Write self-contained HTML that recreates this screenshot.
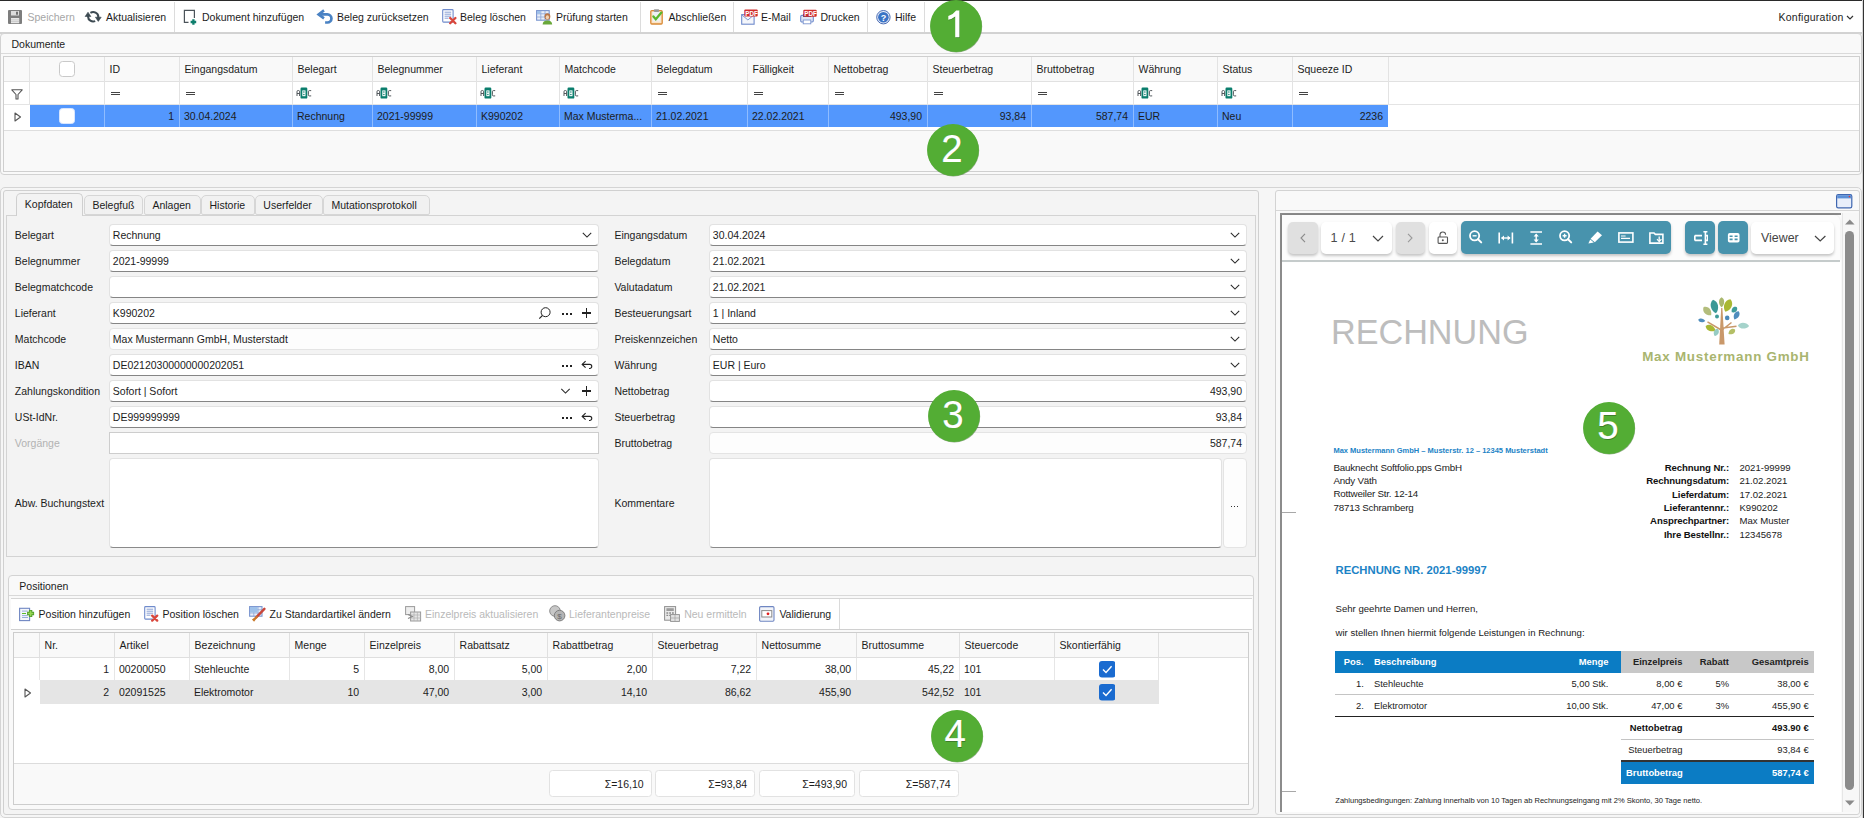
<!DOCTYPE html>
<html><head><meta charset="utf-8"><style>
html,body{margin:0;padding:0}
body{width:1864px;height:818px;overflow:hidden;position:relative;background:#f4f4f4;font-family:"Liberation Sans",sans-serif;color:#1c1c1c}
.a{position:absolute;box-sizing:border-box}
.t{position:absolute;white-space:nowrap}
</style></head><body>
<div class="a" style="left:0px;top:0px;width:1864px;height:1px;background:#2a2a2a"></div>
<div class="a" style="left:0px;top:1px;width:1862px;height:31px;background:#ffffff"></div>
<div class="a" style="left:1862px;top:0px;width:1px;height:818px;background:#d8d8d8"></div>
<div class="a" style="left:1863px;top:0px;width:1px;height:818px;background:#333333"></div>
<div class="a" style="left:0px;top:32px;width:1862px;height:2px;background:#d3d3d3"></div>
<div class="a" style="left:174px;top:2px;width:1px;height:30px;background:#dcdcdc"></div>
<div class="a" style="left:640px;top:2px;width:1px;height:30px;background:#dcdcdc"></div>
<div class="a" style="left:733px;top:2px;width:1px;height:30px;background:#dcdcdc"></div>
<div class="a" style="left:867px;top:2px;width:1px;height:30px;background:#dcdcdc"></div>
<div class="a" style="left:924px;top:2px;width:1px;height:30px;background:#dcdcdc"></div>
<div class="t" style="left:27.5px;top:11.23px;font-size:10.5px;line-height:12.6px;color:#a6a6a6">Speichern</div>
<div class="t" style="left:106px;top:11.23px;font-size:10.5px;line-height:12.6px;">Aktualisieren</div>
<div class="t" style="left:202px;top:11.23px;font-size:10.5px;line-height:12.6px;">Dokument hinzufügen</div>
<div class="t" style="left:337px;top:11.23px;font-size:10.5px;line-height:12.6px;">Beleg zurücksetzen</div>
<div class="t" style="left:460px;top:11.23px;font-size:10.5px;line-height:12.6px;">Beleg löschen</div>
<div class="t" style="left:556px;top:11.23px;font-size:10.5px;line-height:12.6px;">Prüfung starten</div>
<div class="t" style="left:668.5px;top:11.23px;font-size:10.5px;line-height:12.6px;">Abschließen</div>
<div class="t" style="left:761px;top:11.23px;font-size:10.5px;line-height:12.6px;">E-Mail</div>
<div class="t" style="left:820.5px;top:11.23px;font-size:10.5px;line-height:12.6px;">Drucken</div>
<div class="t" style="left:895px;top:11.23px;font-size:10.5px;line-height:12.6px;">Hilfe</div>
<div class="t" style="left:1778.5px;top:11.23px;font-size:10.5px;line-height:12.6px;letter-spacing:0.25px">Konfiguration</div>
<svg class="a" style="left:1846px;top:14.5px;" width="8" height="6" viewBox="0 0 8 6"><path d="M1 1 L4 4 L7 1" stroke="#333" stroke-width="1.2" fill="none"/></svg>
<div class="a" style="left:0px;top:33px;width:1862px;height:142px;background:#f9f9f9;border:1px solid #d2d2d2;border-radius:4px"></div>
<div class="t" style="left:11.5px;top:38.23px;font-size:10.5px;line-height:12.6px;">Dokumente</div>
<div class="a" style="left:1px;top:53px;width:1860px;height:1px;background:#dadada"></div>
<div class="a" style="left:3px;top:56px;width:1857px;height:116px;background:#f9f9f9;border:1px solid #cfcfcf"></div>
<div class="a" style="left:4px;top:57px;width:1855px;height:24px;background:#f9f9f9"></div>
<div class="a" style="left:4px;top:81px;width:1855px;height:1px;background:#e1e1e1"></div>
<div class="a" style="left:4px;top:82px;width:1855px;height:48px;background:#ffffff"></div>
<div class="a" style="left:4px;top:104px;width:1855px;height:1px;background:#e4e4e4"></div>
<div class="a" style="left:4px;top:130px;width:1855px;height:1px;background:#dedede"></div>
<div class="a" style="left:29px;top:57px;width:1px;height:47px;background:#e3e3e3"></div>
<div class="a" style="left:104px;top:57px;width:1px;height:47px;background:#e3e3e3"></div>
<div class="a" style="left:179px;top:57px;width:1px;height:47px;background:#e3e3e3"></div>
<div class="a" style="left:292px;top:57px;width:1px;height:47px;background:#e3e3e3"></div>
<div class="a" style="left:372px;top:57px;width:1px;height:47px;background:#e3e3e3"></div>
<div class="a" style="left:476px;top:57px;width:1px;height:47px;background:#e3e3e3"></div>
<div class="a" style="left:559px;top:57px;width:1px;height:47px;background:#e3e3e3"></div>
<div class="a" style="left:651px;top:57px;width:1px;height:47px;background:#e3e3e3"></div>
<div class="a" style="left:747px;top:57px;width:1px;height:47px;background:#e3e3e3"></div>
<div class="a" style="left:828px;top:57px;width:1px;height:47px;background:#e3e3e3"></div>
<div class="a" style="left:927px;top:57px;width:1px;height:47px;background:#e3e3e3"></div>
<div class="a" style="left:1031px;top:57px;width:1px;height:47px;background:#e3e3e3"></div>
<div class="a" style="left:1133px;top:57px;width:1px;height:47px;background:#e3e3e3"></div>
<div class="a" style="left:1217px;top:57px;width:1px;height:47px;background:#e3e3e3"></div>
<div class="a" style="left:1292px;top:57px;width:1px;height:47px;background:#e3e3e3"></div>
<div class="a" style="left:1388px;top:57px;width:1px;height:47px;background:#e3e3e3"></div>
<div class="a" style="left:30px;top:105px;width:1358px;height:22px;background:#5397fd"></div>
<div class="a" style="left:104px;top:105px;width:1px;height:22px;background:#8fbcff"></div>
<div class="a" style="left:179px;top:105px;width:1px;height:22px;background:#8fbcff"></div>
<div class="a" style="left:292px;top:105px;width:1px;height:22px;background:#8fbcff"></div>
<div class="a" style="left:372px;top:105px;width:1px;height:22px;background:#8fbcff"></div>
<div class="a" style="left:476px;top:105px;width:1px;height:22px;background:#8fbcff"></div>
<div class="a" style="left:559px;top:105px;width:1px;height:22px;background:#8fbcff"></div>
<div class="a" style="left:651px;top:105px;width:1px;height:22px;background:#8fbcff"></div>
<div class="a" style="left:747px;top:105px;width:1px;height:22px;background:#8fbcff"></div>
<div class="a" style="left:828px;top:105px;width:1px;height:22px;background:#8fbcff"></div>
<div class="a" style="left:927px;top:105px;width:1px;height:22px;background:#8fbcff"></div>
<div class="a" style="left:1031px;top:105px;width:1px;height:22px;background:#8fbcff"></div>
<div class="a" style="left:1133px;top:105px;width:1px;height:22px;background:#8fbcff"></div>
<div class="a" style="left:1217px;top:105px;width:1px;height:22px;background:#8fbcff"></div>
<div class="a" style="left:1292px;top:105px;width:1px;height:22px;background:#8fbcff"></div>
<div class="t" style="left:109.5px;top:62.93px;font-size:10.5px;line-height:12.6px;">ID</div>
<div class="a" style="left:110.5px;top:91.5px;width:9px;height:1.2px;background:#444"></div>
<div class="a" style="left:110.5px;top:94px;width:9px;height:1.2px;background:#444"></div>
<div class="t" style="right:1690px;top:110.23px;font-size:10.5px;line-height:12.6px;">1</div>
<div class="t" style="left:184.5px;top:62.93px;font-size:10.5px;line-height:12.6px;">Eingangsdatum</div>
<div class="a" style="left:185.5px;top:91.5px;width:9px;height:1.2px;background:#444"></div>
<div class="a" style="left:185.5px;top:94px;width:9px;height:1.2px;background:#444"></div>
<div class="t" style="left:184px;top:110.23px;font-size:10.5px;line-height:12.6px;">30.04.2024</div>
<div class="t" style="left:297.5px;top:62.93px;font-size:10.5px;line-height:12.6px;">Belegart</div>
<svg class="a" style="left:295.5px;top:87.1px;" width="16" height="12" viewBox="0 0 16 12"><path d="M1 9 V4.7 Q1 3.5 2.1 3.5 H2.5 Q3.6 3.5 3.6 4.7 V9 M1 6.5 H3.6" stroke="#4a5054" stroke-width="0.95" fill="none"/><rect x="4.5" y="0.6" width="6.8" height="11" rx="1.2" fill="#0b7e6d"/><rect x="6.3" y="3.4" width="3.2" height="5.8" fill="#fff"/><circle cx="7.9" cy="5" r="0.75" fill="#0b7e6d"/><circle cx="7.9" cy="7.6" r="0.75" fill="#0b7e6d"/><path d="M15.2 3.6 H13.3 Q12.4 3.6 12.4 4.7 V7.8 Q12.4 8.9 13.3 8.9 H15.2" stroke="#4a5054" stroke-width="0.95" fill="none"/></svg>
<div class="t" style="left:297px;top:110.23px;font-size:10.5px;line-height:12.6px;">Rechnung</div>
<div class="t" style="left:377.5px;top:62.93px;font-size:10.5px;line-height:12.6px;">Belegnummer</div>
<svg class="a" style="left:375.5px;top:87.1px;" width="16" height="12" viewBox="0 0 16 12"><path d="M1 9 V4.7 Q1 3.5 2.1 3.5 H2.5 Q3.6 3.5 3.6 4.7 V9 M1 6.5 H3.6" stroke="#4a5054" stroke-width="0.95" fill="none"/><rect x="4.5" y="0.6" width="6.8" height="11" rx="1.2" fill="#0b7e6d"/><rect x="6.3" y="3.4" width="3.2" height="5.8" fill="#fff"/><circle cx="7.9" cy="5" r="0.75" fill="#0b7e6d"/><circle cx="7.9" cy="7.6" r="0.75" fill="#0b7e6d"/><path d="M15.2 3.6 H13.3 Q12.4 3.6 12.4 4.7 V7.8 Q12.4 8.9 13.3 8.9 H15.2" stroke="#4a5054" stroke-width="0.95" fill="none"/></svg>
<div class="t" style="left:377px;top:110.23px;font-size:10.5px;line-height:12.6px;">2021-99999</div>
<div class="t" style="left:481.5px;top:62.93px;font-size:10.5px;line-height:12.6px;">Lieferant</div>
<svg class="a" style="left:479.5px;top:87.1px;" width="16" height="12" viewBox="0 0 16 12"><path d="M1 9 V4.7 Q1 3.5 2.1 3.5 H2.5 Q3.6 3.5 3.6 4.7 V9 M1 6.5 H3.6" stroke="#4a5054" stroke-width="0.95" fill="none"/><rect x="4.5" y="0.6" width="6.8" height="11" rx="1.2" fill="#0b7e6d"/><rect x="6.3" y="3.4" width="3.2" height="5.8" fill="#fff"/><circle cx="7.9" cy="5" r="0.75" fill="#0b7e6d"/><circle cx="7.9" cy="7.6" r="0.75" fill="#0b7e6d"/><path d="M15.2 3.6 H13.3 Q12.4 3.6 12.4 4.7 V7.8 Q12.4 8.9 13.3 8.9 H15.2" stroke="#4a5054" stroke-width="0.95" fill="none"/></svg>
<div class="t" style="left:481px;top:110.23px;font-size:10.5px;line-height:12.6px;">K990202</div>
<div class="t" style="left:564.5px;top:62.93px;font-size:10.5px;line-height:12.6px;">Matchcode</div>
<svg class="a" style="left:562.5px;top:87.1px;" width="16" height="12" viewBox="0 0 16 12"><path d="M1 9 V4.7 Q1 3.5 2.1 3.5 H2.5 Q3.6 3.5 3.6 4.7 V9 M1 6.5 H3.6" stroke="#4a5054" stroke-width="0.95" fill="none"/><rect x="4.5" y="0.6" width="6.8" height="11" rx="1.2" fill="#0b7e6d"/><rect x="6.3" y="3.4" width="3.2" height="5.8" fill="#fff"/><circle cx="7.9" cy="5" r="0.75" fill="#0b7e6d"/><circle cx="7.9" cy="7.6" r="0.75" fill="#0b7e6d"/><path d="M15.2 3.6 H13.3 Q12.4 3.6 12.4 4.7 V7.8 Q12.4 8.9 13.3 8.9 H15.2" stroke="#4a5054" stroke-width="0.95" fill="none"/></svg>
<div class="t" style="left:564px;top:110.23px;font-size:10.5px;line-height:12.6px;">Max Musterma...</div>
<div class="t" style="left:656.5px;top:62.93px;font-size:10.5px;line-height:12.6px;">Belegdatum</div>
<div class="a" style="left:657.5px;top:91.5px;width:9px;height:1.2px;background:#444"></div>
<div class="a" style="left:657.5px;top:94px;width:9px;height:1.2px;background:#444"></div>
<div class="t" style="left:656px;top:110.23px;font-size:10.5px;line-height:12.6px;">21.02.2021</div>
<div class="t" style="left:752.5px;top:62.93px;font-size:10.5px;line-height:12.6px;">Fälligkeit</div>
<div class="a" style="left:753.5px;top:91.5px;width:9px;height:1.2px;background:#444"></div>
<div class="a" style="left:753.5px;top:94px;width:9px;height:1.2px;background:#444"></div>
<div class="t" style="left:752px;top:110.23px;font-size:10.5px;line-height:12.6px;">22.02.2021</div>
<div class="t" style="left:833.5px;top:62.93px;font-size:10.5px;line-height:12.6px;">Nettobetrag</div>
<div class="a" style="left:834.5px;top:91.5px;width:9px;height:1.2px;background:#444"></div>
<div class="a" style="left:834.5px;top:94px;width:9px;height:1.2px;background:#444"></div>
<div class="t" style="right:942px;top:110.23px;font-size:10.5px;line-height:12.6px;">493,90</div>
<div class="t" style="left:932.5px;top:62.93px;font-size:10.5px;line-height:12.6px;">Steuerbetrag</div>
<div class="a" style="left:933.5px;top:91.5px;width:9px;height:1.2px;background:#444"></div>
<div class="a" style="left:933.5px;top:94px;width:9px;height:1.2px;background:#444"></div>
<div class="t" style="right:838px;top:110.23px;font-size:10.5px;line-height:12.6px;">93,84</div>
<div class="t" style="left:1036.5px;top:62.93px;font-size:10.5px;line-height:12.6px;">Bruttobetrag</div>
<div class="a" style="left:1037.5px;top:91.5px;width:9px;height:1.2px;background:#444"></div>
<div class="a" style="left:1037.5px;top:94px;width:9px;height:1.2px;background:#444"></div>
<div class="t" style="right:736px;top:110.23px;font-size:10.5px;line-height:12.6px;">587,74</div>
<div class="t" style="left:1138.5px;top:62.93px;font-size:10.5px;line-height:12.6px;">Währung</div>
<svg class="a" style="left:1136.5px;top:87.1px;" width="16" height="12" viewBox="0 0 16 12"><path d="M1 9 V4.7 Q1 3.5 2.1 3.5 H2.5 Q3.6 3.5 3.6 4.7 V9 M1 6.5 H3.6" stroke="#4a5054" stroke-width="0.95" fill="none"/><rect x="4.5" y="0.6" width="6.8" height="11" rx="1.2" fill="#0b7e6d"/><rect x="6.3" y="3.4" width="3.2" height="5.8" fill="#fff"/><circle cx="7.9" cy="5" r="0.75" fill="#0b7e6d"/><circle cx="7.9" cy="7.6" r="0.75" fill="#0b7e6d"/><path d="M15.2 3.6 H13.3 Q12.4 3.6 12.4 4.7 V7.8 Q12.4 8.9 13.3 8.9 H15.2" stroke="#4a5054" stroke-width="0.95" fill="none"/></svg>
<div class="t" style="left:1138px;top:110.23px;font-size:10.5px;line-height:12.6px;">EUR</div>
<div class="t" style="left:1222.5px;top:62.93px;font-size:10.5px;line-height:12.6px;">Status</div>
<svg class="a" style="left:1220.5px;top:87.1px;" width="16" height="12" viewBox="0 0 16 12"><path d="M1 9 V4.7 Q1 3.5 2.1 3.5 H2.5 Q3.6 3.5 3.6 4.7 V9 M1 6.5 H3.6" stroke="#4a5054" stroke-width="0.95" fill="none"/><rect x="4.5" y="0.6" width="6.8" height="11" rx="1.2" fill="#0b7e6d"/><rect x="6.3" y="3.4" width="3.2" height="5.8" fill="#fff"/><circle cx="7.9" cy="5" r="0.75" fill="#0b7e6d"/><circle cx="7.9" cy="7.6" r="0.75" fill="#0b7e6d"/><path d="M15.2 3.6 H13.3 Q12.4 3.6 12.4 4.7 V7.8 Q12.4 8.9 13.3 8.9 H15.2" stroke="#4a5054" stroke-width="0.95" fill="none"/></svg>
<div class="t" style="left:1222px;top:110.23px;font-size:10.5px;line-height:12.6px;">Neu</div>
<div class="t" style="left:1297.5px;top:62.93px;font-size:10.5px;line-height:12.6px;">Squeeze ID</div>
<div class="a" style="left:1298.5px;top:91.5px;width:9px;height:1.2px;background:#444"></div>
<div class="a" style="left:1298.5px;top:94px;width:9px;height:1.2px;background:#444"></div>
<div class="t" style="right:481px;top:110.23px;font-size:10.5px;line-height:12.6px;">2236</div>
<div class="a" style="left:59px;top:61px;width:16px;height:16px;background:#fff;border:1px solid #c9c9c9;border-radius:3.5px"></div>
<div class="a" style="left:59px;top:108px;width:16px;height:16px;background:#fff;border:1px solid #d9e6ff;border-radius:3.5px"></div>
<svg class="a" style="left:10.5px;top:88.5px;" width="12" height="11" viewBox="0 0 12 11"><path d="M0.8 0.8 H11.2 L7 5.5 V10 H5 V5.5 Z" stroke="#555" stroke-width="1.1" fill="none" stroke-linejoin="round"/></svg>
<svg class="a" style="left:13.5px;top:111.5px;" width="8" height="10" viewBox="0 0 8 10"><path d="M1 1 L6.5 5 L1 9 Z" stroke="#555" stroke-width="1.1" fill="none" stroke-linejoin="round"/></svg>
<svg class="a" style="left:8px;top:10px;" width="14" height="14" viewBox="0 0 14 14"><rect x="0" y="0" width="14" height="14" rx="1" fill="#7d7d7d"/><rect x="3" y="1" width="8" height="4.5" fill="#dcdcdc"/><rect x="8" y="1.7" width="2" height="3" fill="#707070"/><rect x="3" y="8" width="8.2" height="5.2" fill="#e6e6e6"/><path d="M3 9.8h8.2M3 11.5h8.2" stroke="#c8c8c8" stroke-width="0.8"/></svg>
<svg class="a" style="left:82px;top:8px;" width="22" height="18" viewBox="0 0 22 18"><path d="M13.2 13.12 A5.1 4.7 0 0 1 6.1 8.8 L6.1 7.6" stroke="#3d4a52" stroke-width="2.1" fill="none"/><path d="M8.4 4.87 A5.1 4.7 0 0 1 16.3 8.8 L16.3 10" stroke="#3d4a52" stroke-width="2.1" fill="none"/><path d="M3.1 8.5 L8.9 8.5 L6 4.2 Z" fill="#3d4a52" stroke="#3d4a52" stroke-width="0.6" stroke-linejoin="round"/><path d="M13.4 9.2 L19.2 9.2 L16.3 13.4 Z" fill="#3d4a52" stroke="#3d4a52" stroke-width="0.6" stroke-linejoin="round"/></svg>
<svg class="a" style="left:183px;top:9px;" width="14" height="16" viewBox="0 0 14 16"><path d="M5.5 13.4 H1.4 V1.4 H11.4 V9" stroke="#4b5359" stroke-width="1.2" fill="none"/><path d="M7.6 13 H13.2 M10.4 10.2 V15.8" stroke="#0e7e6d" stroke-width="2.3"/></svg>
<svg class="a" style="left:314px;top:6px;" width="22" height="20" viewBox="0 0 22 20"><path d="M5 8.4 H13.4 A4.05 4.05 0 0 1 13.4 16.5 H11.1" stroke="#4a82c3" stroke-width="2.7" fill="none"/><path d="M10 4.4 L4.6 8.4 L10 12.4" stroke="#4a82c3" stroke-width="2.6" fill="none" stroke-linejoin="miter"/></svg>
<svg class="a" style="left:441.5px;top:9px;" width="15" height="16" viewBox="0 0 15 16"><rect x="0.7" y="0.6" width="10.4" height="12.5" rx="0.8" fill="#fff" stroke="#6f8bcc" stroke-width="1.1"/><path d="M2.6 3.2h6.6M2.6 5.2h6.6M2.6 7.2h6.6M2.6 9.2h4" stroke="#7b95cf" stroke-width="0.9"/><path d="M8.2 9 L13.4 14.2 M13.4 9 L8.2 14.2" stroke="#d9463c" stroke-width="2.3" stroke-linecap="round"/></svg>
<svg class="a" style="left:535.5px;top:9.5px;" width="17" height="15" viewBox="0 0 17 15"><rect x="0.6" y="0.6" width="12.6" height="9.6" fill="#e8eef9" stroke="#7a95cf" stroke-width="1.1"/><path d="M0.6 3.8h12.6M0.6 7h12.6M4.8 0.6v9.6M9 0.6v9.6" stroke="#8aa3d6" stroke-width="0.8"/><rect x="1" y="1" width="3.6" height="2.6" fill="#9ec1ea"/><ellipse cx="11.4" cy="6.5" rx="2.9" ry="3.3" fill="#b97547"/><ellipse cx="11.4" cy="7.2" rx="1.6" ry="2" fill="#f0d2b4"/><path d="M6.6 14.4 Q6.8 10.6 11.4 10.4 Q16 10.6 16.2 14.4 Z" fill="#6aa83a"/></svg>
<svg class="a" style="left:649.5px;top:9px;" width="14" height="16" viewBox="0 0 14 16"><rect x="0.8" y="1.6" width="11.4" height="13.4" rx="1" fill="#fbe3c4" stroke="#d98a36" stroke-width="1.3"/><rect x="2.6" y="3" width="7.8" height="9.6" fill="#eef0f4"/><rect x="3.8" y="0.3" width="5.4" height="2.6" rx="0.8" fill="#9a9a9a"/><path d="M3.4 7.4 L5.8 10.2 L11.4 3.6" stroke="#5ab82c" stroke-width="2.3" fill="none" stroke-linecap="round"/></svg>
<svg class="a" style="left:740.5px;top:8.5px;" width="17.5" height="16" viewBox="0 0 17.5 16"><rect x="0.7" y="5.6" width="12.4" height="9.6" fill="#f4f6fb" stroke="#6f8bcc" stroke-width="1.1"/><path d="M0.9 5.9 L6.9 11 L12.9 5.9" stroke="#7b95cf" stroke-width="1" fill="none"/><rect x="3.3" y="0.5" width="13.4" height="7" rx="1" fill="#cf2c2c"/><text x="4.3" y="6.5" font-family="Liberation Sans" font-weight="bold" font-size="6.3" fill="#fff">PDF</text></svg>
<svg class="a" style="left:799.5px;top:9px;" width="17.5" height="16" viewBox="0 0 17.5 16"><rect x="0.7" y="6.4" width="12.6" height="6.6" rx="1.2" fill="#dfe6f5" stroke="#6f8bcc" stroke-width="1.1"/><rect x="3" y="5" width="8" height="3" fill="#3a5f97"/><rect x="3.2" y="11" width="7.6" height="3.8" fill="#fff" stroke="#7b95cf" stroke-width="0.9"/><rect x="3.3" y="0.7" width="13.4" height="7" rx="1" fill="#cf2c2c"/><text x="4.3" y="6.7" font-family="Liberation Sans" font-weight="bold" font-size="6.3" fill="#fff">PDF</text></svg>
<svg class="a" style="left:875.5px;top:9.5px;" width="15" height="15" viewBox="0 0 15 15"><circle cx="7.4" cy="7.2" r="6.7" fill="#e9eef8" stroke="#4a6cb4" stroke-width="1"/><circle cx="7.4" cy="7.2" r="5.3" fill="#3a73c6"/><text x="7.4" y="10.6" text-anchor="middle" font-family="Liberation Sans" font-weight="bold" font-size="9" fill="#fff">?</text></svg>
<div class="a" style="left:0px;top:187px;width:1862px;height:631px;border:1px solid #d4d4d4;border-radius:5px;background:#f6f6f6"></div>
<div class="a" style="left:3px;top:190px;width:1256px;height:625px;border:1px solid #d0d0d0;border-radius:3px;background:#f4f4f4"></div>
<div class="a" style="left:6px;top:215px;width:1250px;height:342px;border:1px solid #d3d3d3;background:#f3f3f3"></div>
<div class="a" style="left:16px;top:193px;width:67px;height:23px;border:1px solid #cfcfcf;border-bottom:none;border-radius:5px 5px 0 0;background:#f3f3f3"></div>
<div class="t" style="left:24.8px;top:198.23px;font-size:10.5px;line-height:12.6px;">Kopfdaten</div>
<div class="a" style="left:84px;top:195px;width:59px;height:20px;border:1px solid #d6d6d6;border-radius:5px 5px 2px 2px;background:#f1f1f1"></div>
<div class="t" style="left:92.4px;top:198.73px;font-size:10.5px;line-height:12.6px;">Belegfuß</div>
<div class="a" style="left:143.5px;top:195px;width:57.0px;height:20px;border:1px solid #d6d6d6;border-radius:5px 5px 2px 2px;background:#f1f1f1"></div>
<div class="t" style="left:152.4px;top:198.73px;font-size:10.5px;line-height:12.6px;">Anlagen</div>
<div class="a" style="left:201px;top:195px;width:53.5px;height:20px;border:1px solid #d6d6d6;border-radius:5px 5px 2px 2px;background:#f1f1f1"></div>
<div class="t" style="left:209.5px;top:198.73px;font-size:10.5px;line-height:12.6px;">Historie</div>
<div class="a" style="left:255px;top:195px;width:67.5px;height:20px;border:1px solid #d6d6d6;border-radius:5px 5px 2px 2px;background:#f1f1f1"></div>
<div class="t" style="left:263.3px;top:198.73px;font-size:10.5px;line-height:12.6px;">Userfelder</div>
<div class="a" style="left:323px;top:195px;width:106.5px;height:20px;border:1px solid #d6d6d6;border-radius:5px 5px 2px 2px;background:#f1f1f1"></div>
<div class="t" style="left:331.5px;top:198.73px;font-size:10.5px;line-height:12.6px;">Mutationsprotokoll</div>
<div class="a" style="left:17px;top:215px;width:65px;height:1px;background:#f3f3f3"></div>
<div class="t" style="left:14.8px;top:229.23px;font-size:10.5px;line-height:12.6px;">Belegart</div>
<div class="a" style="left:109px;top:224px;width:490px;height:22px;background:#fff;border:1px solid #e2e2e2;border-bottom:1px solid #858585;border-radius:4px"></div>
<div class="t" style="left:112.8px;top:229.23px;font-size:10.5px;line-height:12.6px;">Rechnung</div>
<svg class="a" style="left:580px;top:229px;" width="14" height="12" viewBox="0 0 14 12"><path d="M2.80 3.95 L7.00 8.05 L11.20 3.95" stroke="#2a2a2a" stroke-width="1.1" fill="none"/></svg>
<div class="t" style="left:14.8px;top:255.23px;font-size:10.5px;line-height:12.6px;">Belegnummer</div>
<div class="a" style="left:109px;top:250px;width:490px;height:22px;background:#fff;border:1px solid #e2e2e2;border-bottom:1px solid #858585;border-radius:4px"></div>
<div class="t" style="left:112.8px;top:255.23px;font-size:10.5px;line-height:12.6px;">2021-99999</div>
<div class="t" style="left:14.8px;top:281.23px;font-size:10.5px;line-height:12.6px;">Belegmatchcode</div>
<div class="a" style="left:109px;top:276px;width:490px;height:22px;background:#fff;border:1px solid #e2e2e2;border-bottom:1px solid #858585;border-radius:4px"></div>
<div class="t" style="left:14.8px;top:307.23px;font-size:10.5px;line-height:12.6px;">Lieferant</div>
<div class="a" style="left:109px;top:302px;width:490px;height:22px;background:#fff;border:1px solid #e2e2e2;border-bottom:1px solid #858585;border-radius:4px"></div>
<div class="t" style="left:112.8px;top:307.23px;font-size:10.5px;line-height:12.6px;">K990202</div>
<svg class="a" style="left:537px;top:307px;" width="14" height="13" viewBox="0 0 14 13"><circle cx="8.6" cy="5.2" r="4.5" stroke="#222" stroke-width="1" fill="none"/><path d="M5.4 8.5 L2.3 11.6" stroke="#222" stroke-width="1.1"/></svg>
<div class="a" style="left:561.9px;top:312.5px;width:2px;height:2px;background:#222"></div>
<div class="a" style="left:566.0px;top:312.5px;width:2px;height:2px;background:#222"></div>
<div class="a" style="left:570.1px;top:312.5px;width:2px;height:2px;background:#222"></div>
<div class="a" style="left:581.8px;top:312.45px;width:9.2px;height:1.15px;background:#222"></div>
<div class="a" style="left:585.85px;top:308.4px;width:1.15px;height:9.2px;background:#222"></div>
<div class="t" style="left:14.8px;top:333.23px;font-size:10.5px;line-height:12.6px;">Matchcode</div>
<div class="a" style="left:109px;top:328px;width:490px;height:22px;background:#fdfdfd;border:1px solid #e4e4e4;border-radius:4px"></div>
<div class="t" style="left:112.8px;top:333.23px;font-size:10.5px;line-height:12.6px;">Max Mustermann GmbH, Musterstadt</div>
<div class="t" style="left:14.8px;top:359.23px;font-size:10.5px;line-height:12.6px;">IBAN</div>
<div class="a" style="left:109px;top:354px;width:490px;height:22px;background:#fff;border:1px solid #e2e2e2;border-bottom:1px solid #858585;border-radius:4px"></div>
<div class="t" style="left:112.8px;top:359.23px;font-size:10.5px;line-height:12.6px;">DE02120300000000202051</div>
<div class="a" style="left:561.9px;top:364.5px;width:2px;height:2px;background:#222"></div>
<div class="a" style="left:566.0px;top:364.5px;width:2px;height:2px;background:#222"></div>
<div class="a" style="left:570.1px;top:364.5px;width:2px;height:2px;background:#222"></div>
<svg class="a" style="left:580px;top:358.5px;" width="14" height="12" viewBox="0 0 14 12"><path d="M2.2 5.4 H9.7 A2.05 2.05 0 0 1 9.7 9.5 H9" stroke="#222" stroke-width="1.15" fill="none"/><path d="M5.6 2.1 L2.2 5.4 L5.6 8.7" stroke="#222" stroke-width="1.15" fill="none"/></svg>
<div class="t" style="left:14.8px;top:385.23px;font-size:10.5px;line-height:12.6px;">Zahlungskondition</div>
<div class="a" style="left:109px;top:380px;width:490px;height:22px;background:#fff;border:1px solid #e2e2e2;border-bottom:1px solid #858585;border-radius:4px"></div>
<div class="t" style="left:112.8px;top:385.23px;font-size:10.5px;line-height:12.6px;">Sofort | Sofort</div>
<svg class="a" style="left:558px;top:385px;" width="14" height="12" viewBox="0 0 14 12"><path d="M3.30 3.95 L7.50 8.05 L11.70 3.95" stroke="#2a2a2a" stroke-width="1.1" fill="none"/></svg>
<div class="a" style="left:581.8px;top:390.45px;width:9.2px;height:1.15px;background:#222"></div>
<div class="a" style="left:585.85px;top:386.4px;width:1.15px;height:9.2px;background:#222"></div>
<div class="t" style="left:14.8px;top:411.23px;font-size:10.5px;line-height:12.6px;">USt-IdNr.</div>
<div class="a" style="left:109px;top:406px;width:490px;height:22px;background:#fff;border:1px solid #e2e2e2;border-bottom:1px solid #858585;border-radius:4px"></div>
<div class="t" style="left:112.8px;top:411.23px;font-size:10.5px;line-height:12.6px;">DE999999999</div>
<div class="a" style="left:561.9px;top:416.5px;width:2px;height:2px;background:#222"></div>
<div class="a" style="left:566.0px;top:416.5px;width:2px;height:2px;background:#222"></div>
<div class="a" style="left:570.1px;top:416.5px;width:2px;height:2px;background:#222"></div>
<svg class="a" style="left:580px;top:410.5px;" width="14" height="12" viewBox="0 0 14 12"><path d="M2.2 5.4 H9.7 A2.05 2.05 0 0 1 9.7 9.5 H9" stroke="#222" stroke-width="1.15" fill="none"/><path d="M5.6 2.1 L2.2 5.4 L5.6 8.7" stroke="#222" stroke-width="1.15" fill="none"/></svg>
<div class="t" style="left:14.8px;top:437.23px;font-size:10.5px;line-height:12.6px;color:#b2b2b2">Vorgänge</div>
<div class="a" style="left:109px;top:432px;width:490px;height:22px;background:#fff;border:1px solid #cdcdcd"></div>
<div class="a" style="left:109px;top:458px;width:490px;height:90px;background:#fff;border:1px solid #e2e2e2;border-bottom:1px solid #8a8a8a;border-radius:4px"></div>
<div class="t" style="left:14.8px;top:497.23px;font-size:10.5px;line-height:12.6px;">Abw. Buchungstext</div>
<div class="t" style="left:614.4px;top:229.23px;font-size:10.5px;line-height:12.6px;">Eingangsdatum</div>
<div class="a" style="left:709px;top:224px;width:538px;height:22px;background:#fff;border:1px solid #e2e2e2;border-bottom:1px solid #858585;border-radius:4px"></div>
<div class="t" style="left:712.8px;top:229.23px;font-size:10.5px;line-height:12.6px;">30.04.2024</div>
<svg class="a" style="left:1228px;top:229px;" width="14" height="12" viewBox="0 0 14 12"><path d="M2.80 3.95 L7.00 8.05 L11.20 3.95" stroke="#2a2a2a" stroke-width="1.1" fill="none"/></svg>
<div class="t" style="left:614.4px;top:255.23px;font-size:10.5px;line-height:12.6px;">Belegdatum</div>
<div class="a" style="left:709px;top:250px;width:538px;height:22px;background:#fff;border:1px solid #e2e2e2;border-bottom:1px solid #858585;border-radius:4px"></div>
<div class="t" style="left:712.8px;top:255.23px;font-size:10.5px;line-height:12.6px;">21.02.2021</div>
<svg class="a" style="left:1228px;top:255px;" width="14" height="12" viewBox="0 0 14 12"><path d="M2.80 3.95 L7.00 8.05 L11.20 3.95" stroke="#2a2a2a" stroke-width="1.1" fill="none"/></svg>
<div class="t" style="left:614.4px;top:281.23px;font-size:10.5px;line-height:12.6px;">Valutadatum</div>
<div class="a" style="left:709px;top:276px;width:538px;height:22px;background:#fff;border:1px solid #e2e2e2;border-bottom:1px solid #858585;border-radius:4px"></div>
<div class="t" style="left:712.8px;top:281.23px;font-size:10.5px;line-height:12.6px;">21.02.2021</div>
<svg class="a" style="left:1228px;top:281px;" width="14" height="12" viewBox="0 0 14 12"><path d="M2.80 3.95 L7.00 8.05 L11.20 3.95" stroke="#2a2a2a" stroke-width="1.1" fill="none"/></svg>
<div class="t" style="left:614.4px;top:307.23px;font-size:10.5px;line-height:12.6px;">Besteuerungsart</div>
<div class="a" style="left:709px;top:302px;width:538px;height:22px;background:#fff;border:1px solid #e2e2e2;border-bottom:1px solid #858585;border-radius:4px"></div>
<div class="t" style="left:712.8px;top:307.23px;font-size:10.5px;line-height:12.6px;">1 | Inland</div>
<svg class="a" style="left:1228px;top:307px;" width="14" height="12" viewBox="0 0 14 12"><path d="M2.80 3.95 L7.00 8.05 L11.20 3.95" stroke="#2a2a2a" stroke-width="1.1" fill="none"/></svg>
<div class="t" style="left:614.4px;top:333.23px;font-size:10.5px;line-height:12.6px;">Preiskennzeichen</div>
<div class="a" style="left:709px;top:328px;width:538px;height:22px;background:#fff;border:1px solid #e2e2e2;border-bottom:1px solid #858585;border-radius:4px"></div>
<div class="t" style="left:712.8px;top:333.23px;font-size:10.5px;line-height:12.6px;">Netto</div>
<svg class="a" style="left:1228px;top:333px;" width="14" height="12" viewBox="0 0 14 12"><path d="M2.80 3.95 L7.00 8.05 L11.20 3.95" stroke="#2a2a2a" stroke-width="1.1" fill="none"/></svg>
<div class="t" style="left:614.4px;top:359.23px;font-size:10.5px;line-height:12.6px;">Währung</div>
<div class="a" style="left:709px;top:354px;width:538px;height:22px;background:#fff;border:1px solid #e2e2e2;border-bottom:1px solid #858585;border-radius:4px"></div>
<div class="t" style="left:712.8px;top:359.23px;font-size:10.5px;line-height:12.6px;">EUR | Euro</div>
<svg class="a" style="left:1228px;top:359px;" width="14" height="12" viewBox="0 0 14 12"><path d="M2.80 3.95 L7.00 8.05 L11.20 3.95" stroke="#2a2a2a" stroke-width="1.1" fill="none"/></svg>
<div class="t" style="left:614.4px;top:385.23px;font-size:10.5px;line-height:12.6px;">Nettobetrag</div>
<div class="a" style="left:709px;top:380px;width:538px;height:22px;background:#fff;border:1px solid #e2e2e2;border-bottom:1px solid #858585;border-radius:4px"></div>
<div class="t" style="right:622px;top:385.23px;font-size:10.5px;line-height:12.6px;">493,90</div>
<div class="t" style="left:614.4px;top:411.23px;font-size:10.5px;line-height:12.6px;">Steuerbetrag</div>
<div class="a" style="left:709px;top:406px;width:538px;height:22px;background:#fff;border:1px solid #e2e2e2;border-bottom:1px solid #858585;border-radius:4px"></div>
<div class="t" style="right:622px;top:411.23px;font-size:10.5px;line-height:12.6px;">93,84</div>
<div class="t" style="left:614.4px;top:437.23px;font-size:10.5px;line-height:12.6px;">Bruttobetrag</div>
<div class="a" style="left:709px;top:432px;width:538px;height:22px;background:#fdfdfd;border:1px solid #e4e4e4;border-radius:4px"></div>
<div class="t" style="right:622px;top:437.23px;font-size:10.5px;line-height:12.6px;">587,74</div>
<div class="a" style="left:709px;top:458px;width:513px;height:90px;background:#fff;border:1px solid #e2e2e2;border-bottom:1px solid #8a8a8a;border-radius:4px"></div>
<div class="a" style="left:1223px;top:458px;width:24px;height:90px;background:#fdfdfd;border:1px solid #e4e4e4;border-radius:4px"></div>
<div class="t" style="left:614.4px;top:497.23px;font-size:10.5px;line-height:12.6px;">Kommentare</div>
<div class="a" style="left:1230.5px;top:505.5px;width:1.5px;height:1.5px;background:#333"></div>
<div class="a" style="left:1233.5px;top:505.5px;width:1.5px;height:1.5px;background:#333"></div>
<div class="a" style="left:1236.5px;top:505.5px;width:1.5px;height:1.5px;background:#333"></div>
<div class="a" style="left:8px;top:575px;width:1246px;height:235px;background:#f9f9f9;border:1px solid #d3d3d3;border-radius:4px"></div>
<div class="t" style="left:19.3px;top:580.23px;font-size:10.5px;line-height:12.6px;">Positionen</div>
<div class="a" style="left:9px;top:595px;width:1244px;height:1px;background:#d9d9d9"></div>
<div class="a" style="left:11px;top:598px;width:1241px;height:32px;background:#ffffff;border-top:1px solid #d6d6d6;border-bottom:1px solid #d0d0d0"></div>
<div class="a" style="left:839px;top:599px;width:1px;height:29.5px;background:#dadada"></div>
<div class="t" style="left:38.6px;top:608.23px;font-size:10.5px;line-height:12.6px;">Position hinzufügen</div>
<div class="t" style="left:162.5px;top:608.23px;font-size:10.5px;line-height:12.6px;">Position löschen</div>
<div class="t" style="left:269.5px;top:608.23px;font-size:10.5px;line-height:12.6px;">Zu Standardartikel ändern</div>
<div class="t" style="left:425px;top:608.23px;font-size:10.5px;line-height:12.6px;color:#b9b9b9">Einzelpreis aktualisieren</div>
<div class="t" style="left:569px;top:608.23px;font-size:10.5px;line-height:12.6px;color:#b9b9b9">Lieferantenpreise</div>
<div class="t" style="left:684.2px;top:608.23px;font-size:10.5px;line-height:12.6px;color:#b9b9b9">Neu ermitteln</div>
<div class="t" style="left:779.4px;top:608.23px;font-size:10.5px;line-height:12.6px;">Validierung</div>
<svg class="a" style="left:18px;top:606px;" width="17" height="16" viewBox="0 0 17 16"><rect x="1.6" y="2.3" width="10" height="12.3" fill="#f4f6fb" stroke="#6f86c2" stroke-width="1.1"/><path d="M4 5.1h5.6M4 9.6h5.6M4 11.5h6" stroke="#8aa3d6" stroke-width="0.9"/><path d="M4 7.5h4" stroke="#5ab82c" stroke-width="1"/><path d="M12.6 4 V11 M9.1 7.5 H16.1" stroke="#4e9a2a" stroke-width="3.4"/><path d="M12.6 4.8 V10.2 M9.9 7.5 H15.3" stroke="#95d553" stroke-width="1.6"/></svg>
<svg class="a" style="left:143.5px;top:605.5px;" width="15" height="16" viewBox="0 0 15 16"><rect x="0.7" y="0.6" width="10.4" height="12.5" rx="0.8" fill="#fff" stroke="#6f8bcc" stroke-width="1.1"/><path d="M2.6 3.2h6.6M2.6 5.2h6.6M2.6 7.2h6.6M2.6 9.2h4" stroke="#7b95cf" stroke-width="0.9"/><path d="M8.2 9.6 L13.2 14.6 M13.2 9.6 L8.2 14.6" stroke="#d9463c" stroke-width="2.3" stroke-linecap="round"/></svg>
<svg class="a" style="left:248.5px;top:606px;" width="17" height="16" viewBox="0 0 17 16"><rect x="0.6" y="0.6" width="12.4" height="9.6" fill="#e8eef9" stroke="#7a95cf" stroke-width="1.1"/><path d="M0.6 3.8h12.4M0.6 7h12.4M4.8 0.6v9.6M9 0.6v9.6" stroke="#8aa3d6" stroke-width="0.8"/><rect x="1" y="1" width="7.6" height="5.6" fill="#9ec1ea"/><path d="M15.4 2.8 L7 11.6" stroke="#c8463a" stroke-width="2.4" stroke-linecap="round"/><path d="M8.4 10.2 L5 14.6 L4 13.6 Z" fill="#c97a2a" stroke="#c97a2a" stroke-width="1.4"/></svg>
<svg class="a" style="left:404.5px;top:605.5px;" width="17" height="16" viewBox="0 0 17 16"><rect x="0.6" y="0.6" width="9" height="8" fill="#eee" stroke="#9a9a9a" stroke-width="1"/><rect x="5.6" y="6" width="10" height="9" fill="#e6e6e6" stroke="#9a9a9a" stroke-width="1"/><path d="M5.6 9h10M5.6 12h10M9 6v9M12.4 6v9" stroke="#b0b0b0" stroke-width="0.7"/><path d="M3 8.5 L7.4 10.5 L3 12.5" stroke="#8a8a8a" stroke-width="1.1" fill="none"/></svg>
<svg class="a" style="left:548.5px;top:605px;" width="17" height="17" viewBox="0 0 17 17"><circle cx="6" cy="6" r="5.3" fill="#c7c7c7" stroke="#8d8d8d" stroke-width="1"/><circle cx="10.6" cy="10.6" r="5.3" fill="#b4b4b4" stroke="#7f7f7f" stroke-width="1"/><text x="10.6" y="13.6" text-anchor="middle" font-family="Liberation Sans" font-size="8" fill="#6a6a6a">$</text></svg>
<svg class="a" style="left:663.5px;top:605.5px;" width="16" height="16" viewBox="0 0 16 16"><rect x="0.6" y="0.6" width="11" height="13.6" fill="#eaeaea" stroke="#8f8f8f" stroke-width="1"/><rect x="2.4" y="2.2" width="7.4" height="2.8" fill="#9c9c9c"/><path d="M2.4 7h1.8M5.2 7h1.8M8 7h1.8M2.4 9.4h1.8M5.2 9.4h1.8" stroke="#8a8a8a" stroke-width="1.4"/><rect x="6.6" y="8.6" width="8.8" height="6.8" fill="#e2e2e2" stroke="#8f8f8f" stroke-width="0.9"/><path d="M6.6 12h8.8M11 8.6v6.8" stroke="#a0a0a0" stroke-width="0.7"/></svg>
<svg class="a" style="left:758.5px;top:605.5px;" width="16" height="16" viewBox="0 0 16 16"><rect x="0.6" y="0.6" width="14.4" height="14.6" rx="1.2" fill="#f2f4f9" stroke="#6f86c2" stroke-width="1.1"/><rect x="2.8" y="4.6" width="10" height="6.4" fill="#fff" stroke="#8a8a8a" stroke-width="1"/><circle cx="9" cy="7.8" r="1.4" fill="#e01b1b"/></svg>
<div class="a" style="left:13px;top:632px;width:1236px;height:173px;background:#ffffff;border:1px solid #cdcdcd"></div>
<div class="a" style="left:14px;top:633px;width:1234px;height:24px;background:#f9f9f9"></div>
<div class="a" style="left:14px;top:657px;width:1234px;height:1px;background:#dfdfdf"></div>
<div class="a" style="left:39px;top:633px;width:1px;height:24px;background:#e0e0e0"></div>
<div class="a" style="left:39px;top:658px;width:1px;height:22px;background:#e6e6e6"></div>
<div class="a" style="left:114px;top:633px;width:1px;height:24px;background:#e0e0e0"></div>
<div class="a" style="left:114px;top:658px;width:1px;height:22px;background:#e6e6e6"></div>
<div class="a" style="left:189px;top:633px;width:1px;height:24px;background:#e0e0e0"></div>
<div class="a" style="left:189px;top:658px;width:1px;height:22px;background:#e6e6e6"></div>
<div class="a" style="left:289px;top:633px;width:1px;height:24px;background:#e0e0e0"></div>
<div class="a" style="left:289px;top:658px;width:1px;height:22px;background:#e6e6e6"></div>
<div class="a" style="left:364px;top:633px;width:1px;height:24px;background:#e0e0e0"></div>
<div class="a" style="left:364px;top:658px;width:1px;height:22px;background:#e6e6e6"></div>
<div class="a" style="left:454px;top:633px;width:1px;height:24px;background:#e0e0e0"></div>
<div class="a" style="left:454px;top:658px;width:1px;height:22px;background:#e6e6e6"></div>
<div class="a" style="left:547px;top:633px;width:1px;height:24px;background:#e0e0e0"></div>
<div class="a" style="left:547px;top:658px;width:1px;height:22px;background:#e6e6e6"></div>
<div class="a" style="left:652px;top:633px;width:1px;height:24px;background:#e0e0e0"></div>
<div class="a" style="left:652px;top:658px;width:1px;height:22px;background:#e6e6e6"></div>
<div class="a" style="left:756px;top:633px;width:1px;height:24px;background:#e0e0e0"></div>
<div class="a" style="left:756px;top:658px;width:1px;height:22px;background:#e6e6e6"></div>
<div class="a" style="left:856px;top:633px;width:1px;height:24px;background:#e0e0e0"></div>
<div class="a" style="left:856px;top:658px;width:1px;height:22px;background:#e6e6e6"></div>
<div class="a" style="left:959px;top:633px;width:1px;height:24px;background:#e0e0e0"></div>
<div class="a" style="left:959px;top:658px;width:1px;height:22px;background:#e6e6e6"></div>
<div class="a" style="left:1054px;top:633px;width:1px;height:24px;background:#e0e0e0"></div>
<div class="a" style="left:1054px;top:658px;width:1px;height:22px;background:#e6e6e6"></div>
<div class="a" style="left:1158px;top:633px;width:1px;height:24px;background:#e0e0e0"></div>
<div class="a" style="left:1158px;top:658px;width:1px;height:22px;background:#e6e6e6"></div>
<div class="a" style="left:40px;top:680px;width:1119px;height:24px;background:#e5e5e5"></div>
<div class="t" style="left:44.6px;top:639.03px;font-size:10.5px;line-height:12.6px;">Nr.</div>
<div class="t" style="left:119.6px;top:639.03px;font-size:10.5px;line-height:12.6px;">Artikel</div>
<div class="t" style="left:194.6px;top:639.03px;font-size:10.5px;line-height:12.6px;">Bezeichnung</div>
<div class="t" style="left:294.6px;top:639.03px;font-size:10.5px;line-height:12.6px;">Menge</div>
<div class="t" style="left:369.6px;top:639.03px;font-size:10.5px;line-height:12.6px;">Einzelpreis</div>
<div class="t" style="left:459.6px;top:639.03px;font-size:10.5px;line-height:12.6px;">Rabattsatz</div>
<div class="t" style="left:552.6px;top:639.03px;font-size:10.5px;line-height:12.6px;">Rabattbetrag</div>
<div class="t" style="left:657.6px;top:639.03px;font-size:10.5px;line-height:12.6px;">Steuerbetrag</div>
<div class="t" style="left:761.6px;top:639.03px;font-size:10.5px;line-height:12.6px;">Nettosumme</div>
<div class="t" style="left:861.6px;top:639.03px;font-size:10.5px;line-height:12.6px;">Bruttosumme</div>
<div class="t" style="left:964.6px;top:639.03px;font-size:10.5px;line-height:12.6px;">Steuercode</div>
<div class="t" style="left:1059.6px;top:639.03px;font-size:10.5px;line-height:12.6px;">Skontierfähig</div>
<div class="t" style="right:1754.8px;top:662.73px;font-size:10.5px;line-height:12.6px;">1</div>
<div class="t" style="left:118.9px;top:662.73px;font-size:10.5px;line-height:12.6px;">00200050</div>
<div class="t" style="left:193.9px;top:662.73px;font-size:10.5px;line-height:12.6px;">Stehleuchte</div>
<div class="t" style="right:1504.8px;top:662.73px;font-size:10.5px;line-height:12.6px;">5</div>
<div class="t" style="right:1414.8px;top:662.73px;font-size:10.5px;line-height:12.6px;">8,00</div>
<div class="t" style="right:1321.8px;top:662.73px;font-size:10.5px;line-height:12.6px;">5,00</div>
<div class="t" style="right:1216.8px;top:662.73px;font-size:10.5px;line-height:12.6px;">2,00</div>
<div class="t" style="right:1112.8px;top:662.73px;font-size:10.5px;line-height:12.6px;">7,22</div>
<div class="t" style="right:1012.8px;top:662.73px;font-size:10.5px;line-height:12.6px;">38,00</div>
<div class="t" style="right:909.8px;top:662.73px;font-size:10.5px;line-height:12.6px;">45,22</div>
<div class="t" style="left:963.9px;top:662.73px;font-size:10.5px;line-height:12.6px;">101</div>
<svg class="a" style="left:1098.5px;top:661.0px;" width="16.5" height="16.5" viewBox="0 0 16.5 16.5"><rect x="0" y="0" width="16.5" height="16.5" rx="3" fill="#1a6bd0"/><path d="M4 8.4 L7 11.4 L12.6 5.2" stroke="#fff" stroke-width="1.4" fill="none"/></svg>
<div class="t" style="right:1754.8px;top:685.73px;font-size:10.5px;line-height:12.6px;">2</div>
<div class="t" style="left:118.9px;top:685.73px;font-size:10.5px;line-height:12.6px;">02091525</div>
<div class="t" style="left:193.9px;top:685.73px;font-size:10.5px;line-height:12.6px;">Elektromotor</div>
<div class="t" style="right:1504.8px;top:685.73px;font-size:10.5px;line-height:12.6px;">10</div>
<div class="t" style="right:1414.8px;top:685.73px;font-size:10.5px;line-height:12.6px;">47,00</div>
<div class="t" style="right:1321.8px;top:685.73px;font-size:10.5px;line-height:12.6px;">3,00</div>
<div class="t" style="right:1216.8px;top:685.73px;font-size:10.5px;line-height:12.6px;">14,10</div>
<div class="t" style="right:1112.8px;top:685.73px;font-size:10.5px;line-height:12.6px;">86,62</div>
<div class="t" style="right:1012.8px;top:685.73px;font-size:10.5px;line-height:12.6px;">455,90</div>
<div class="t" style="right:909.8px;top:685.73px;font-size:10.5px;line-height:12.6px;">542,52</div>
<div class="t" style="left:963.9px;top:685.73px;font-size:10.5px;line-height:12.6px;">101</div>
<svg class="a" style="left:1098.5px;top:684.3px;" width="16.5" height="16.5" viewBox="0 0 16.5 16.5"><rect x="0" y="0" width="16.5" height="16.5" rx="3" fill="#1a6bd0"/><path d="M4 8.4 L7 11.4 L12.6 5.2" stroke="#fff" stroke-width="1.4" fill="none"/></svg>
<svg class="a" style="left:23.5px;top:688px;" width="8" height="10" viewBox="0 0 8 10"><path d="M1 1 L6.5 5 L1 9 Z" stroke="#555" stroke-width="1.1" fill="none" stroke-linejoin="round"/></svg>
<div class="a" style="left:14px;top:763px;width:1234px;height:1px;background:#dcdcdc"></div>
<div class="a" style="left:14px;top:764px;width:1234px;height:40px;background:#f9f9f9"></div>
<div class="a" style="left:549.4px;top:770.3px;width:102.20000000000005px;height:27px;background:#fff;border:1px solid #e2e2e2;border-radius:3.5px"></div>
<div class="t" style="right:1220.4px;top:778.23px;font-size:10.5px;line-height:12.6px;">Σ=16,10</div>
<div class="a" style="left:654.5px;top:770.3px;width:100.60000000000002px;height:27px;background:#fff;border:1px solid #e2e2e2;border-radius:3.5px"></div>
<div class="t" style="right:1116.9px;top:778.23px;font-size:10.5px;line-height:12.6px;">Σ=93,84</div>
<div class="a" style="left:758.8px;top:770.3px;width:96.20000000000005px;height:27px;background:#fff;border:1px solid #e2e2e2;border-radius:3.5px"></div>
<div class="t" style="right:1017px;top:778.23px;font-size:10.5px;line-height:12.6px;">Σ=493,90</div>
<div class="a" style="left:859px;top:770.3px;width:99.60000000000002px;height:27px;background:#fff;border:1px solid #e2e2e2;border-radius:3.5px"></div>
<div class="t" style="right:913.4px;top:778.23px;font-size:10.5px;line-height:12.6px;">Σ=587,74</div>
<div class="a" style="left:1275px;top:190px;width:585px;height:625px;background:#f9f9f9;border:1px solid #d3d3d3;border-radius:3px"></div>
<div class="a" style="left:1276px;top:210px;width:583px;height:1px;background:#d6d6d6"></div>
<svg class="a" style="left:1836px;top:194px;" width="16.5" height="14.5" viewBox="0 0 16.5 14.5"><rect x="0.6" y="0.6" width="15.2" height="13.2" rx="1.6" fill="#e8eefa" stroke="#3f66b0" stroke-width="1.2"/><rect x="1.2" y="1.2" width="14" height="3.2" fill="#5b8fd6"/><circle cx="13.4" cy="2.6" r="0.8" fill="#e03a3a"/></svg>
<div class="a" style="left:1280px;top:213px;width:561px;height:599px;background:#ffffff"></div>
<div class="a" style="left:1280px;top:213px;width:561px;height:2px;background:#8c8c8c"></div>
<div class="a" style="left:1280px;top:213px;width:2px;height:599px;background:#8c8c8c"></div>
<div class="a" style="left:1841.5px;top:213px;width:17.5px;height:599px;background:#f7f7f7;border-left:1px solid #e6e6e6"></div>
<svg class="a" style="left:1844.5px;top:218.5px;" width="10" height="6" viewBox="0 0 10 6"><path d="M0 5.6 L4.8 0.4 L9.6 5.6 Z" fill="#8a8a8a"/></svg>
<svg class="a" style="left:1844.5px;top:800px;" width="10" height="6" viewBox="0 0 10 6"><path d="M0 0.4 L4.8 5.6 L9.6 0.4 Z" fill="#8a8a8a"/></svg>
<div class="a" style="left:1845.2px;top:231px;width:9px;height:559px;background:#8b8b8b;border-radius:4.5px"></div>
<div class="a" style="left:1282px;top:215px;width:558px;height:45px;background:#fcfcfc;border-radius:0 6px 0 0;box-shadow:0 0 3px rgba(0,0,0,0.12)"></div>
<div class="a" style="left:1282px;top:260px;width:558px;height:1.5px;background:#c5cbcb"></div>
<div class="a" style="left:1288px;top:221.5px;width:30px;height:32.5px;background:#e0e0e0;border-radius:5px;box-shadow:0 2px 3px rgba(0,0,0,0.22)"></div>
<div class="a" style="left:1321px;top:221.5px;width:71px;height:32.5px;background:#ffffff;border-radius:5px;box-shadow:0 2px 3px rgba(0,0,0,0.22)"></div>
<div class="a" style="left:1395.5px;top:221.5px;width:29.5px;height:32.5px;background:#e0e0e0;border-radius:5px;box-shadow:0 2px 3px rgba(0,0,0,0.22)"></div>
<div class="a" style="left:1429px;top:221.5px;width:28px;height:32.5px;background:#ffffff;border-radius:5px;box-shadow:0 2px 3px rgba(0,0,0,0.22)"></div>
<div class="a" style="left:1461px;top:221px;width:210px;height:33px;background:#4893ad;border-radius:5px;box-shadow:0 2px 3px rgba(0,0,0,0.22)"></div>
<div class="a" style="left:1685px;top:221px;width:30px;height:33px;background:#4893ad;border-radius:5px;box-shadow:0 2px 3px rgba(0,0,0,0.22)"></div>
<div class="a" style="left:1718px;top:221px;width:30px;height:33px;background:#4893ad;border-radius:5px;box-shadow:0 2px 3px rgba(0,0,0,0.22)"></div>
<div class="a" style="left:1751px;top:222px;width:83px;height:32px;background:#ffffff;border-radius:5px;box-shadow:0 2px 3px rgba(0,0,0,0.22)"></div>
<svg class="a" style="left:1300px;top:233px;" width="6" height="10" viewBox="0 0 6 10"><path d="M5 0.8 L1 5 L5 9.2" stroke="#8a8a8a" stroke-width="1.1" fill="none"/></svg>
<svg class="a" style="left:1407px;top:233px;" width="6" height="10" viewBox="0 0 6 10"><path d="M1 0.8 L5 5 L1 9.2" stroke="#9a9a9a" stroke-width="1.1" fill="none"/></svg>
<div class="t" style="left:1330.5px;top:231.48px;font-size:12.6px;line-height:15.12px;color:#4a4a4a;letter-spacing:0.2px">1 / 1</div>
<svg class="a" style="left:1371.5px;top:234.5px;" width="12" height="7" viewBox="0 0 12 7"><path d="M1 1 L6 6 L11 1" stroke="#444" stroke-width="1.2" fill="none"/></svg>
<svg class="a" style="left:1437px;top:230.5px;" width="11.5" height="13" viewBox="0 0 11.5 13"><path d="M3 6 V3.8 A2.8 2.8 0 0 1 8.6 3.8" stroke="#555" stroke-width="1.1" fill="none"/><rect x="1.1" y="6" width="9.4" height="6.4" rx="0.8" stroke="#555" stroke-width="1.1" fill="none"/><circle cx="5.8" cy="9.2" r="1" fill="#555"/></svg>
<div class="t" style="left:1761px;top:230.86px;font-size:12.4px;line-height:14.88px;color:#444">Viewer</div>
<svg class="a" style="left:1813.5px;top:234.5px;" width="12.5" height="7" viewBox="0 0 12.5 7"><path d="M1 1 L6.2 6 L11.4 1" stroke="#444" stroke-width="1.2" fill="none"/></svg>
<svg class="a" style="left:1468px;top:229px;" width="16" height="16" viewBox="0 0 16 16"><circle cx="6.6" cy="6.8" r="4.6" stroke="#ffffff" stroke-width="1.8" fill="none"/><path d="M4.6 6.8h4" stroke="#ffffff" stroke-width="1.4"/><path d="M10 10.2 L13.2 13.4" stroke="#ffffff" stroke-width="2" stroke-linecap="round"/></svg>
<svg class="a" style="left:1498px;top:231.5px;" width="16" height="12" viewBox="0 0 16 12"><path d="M1.2 0.5v11M14.4 0.5v11" stroke="#ffffff" stroke-width="1.6"/><path d="M3.6 6h8.4" stroke="#ffffff" stroke-width="1.4"/><path d="M3 6 L6 3.4 V8.6 Z M12.6 6 L9.6 3.4 V8.6 Z" fill="#ffffff"/></svg>
<svg class="a" style="left:1529.5px;top:230.5px;" width="12.5" height="14" viewBox="0 0 12.5 14"><path d="M0.4 1h11.6M0.4 13h11.6" stroke="#ffffff" stroke-width="1.6"/><path d="M6.2 3.4v7.2" stroke="#ffffff" stroke-width="1.4"/><path d="M6.2 2.6 L3.6 5.6 H8.8 Z M6.2 11.4 L3.6 8.4 H8.8 Z" fill="#ffffff"/></svg>
<svg class="a" style="left:1558px;top:229px;" width="16" height="16" viewBox="0 0 16 16"><circle cx="6.6" cy="6.8" r="4.6" stroke="#ffffff" stroke-width="1.8" fill="none"/><path d="M4.6 6.8h4M6.6 4.8v4" stroke="#ffffff" stroke-width="1.4"/><path d="M10 10.2 L13.2 13.4" stroke="#ffffff" stroke-width="2" stroke-linecap="round"/></svg>
<svg class="a" style="left:1588px;top:230px;" width="16" height="14" viewBox="0 0 16 14"><path d="M9.6 1.6 L14 5.2 L6.8 12.2 L2.6 8.8 Z" fill="#ffffff"/><path d="M2.2 9.6 L5.8 12.6 L0.4 13.6 Z" fill="#ffffff"/></svg>
<svg class="a" style="left:1618px;top:232px;" width="16" height="11" viewBox="0 0 16 11"><rect x="0.9" y="0.9" width="14" height="9.2" stroke="#ffffff" stroke-width="1.6" fill="none"/><path d="M3 4h4.6M3 6.4h9" stroke="#ffffff" stroke-width="1.1"/></svg>
<svg class="a" style="left:1648.5px;top:231.5px;" width="15" height="12" viewBox="0 0 15 12"><path d="M0.9 11.1 V1 H5 L6.4 2.4 H13.9 V11.1 Z" stroke="#ffffff" stroke-width="1.6" fill="none"/><path d="M10.2 4.4v4.6" stroke="#ffffff" stroke-width="1.3"/><path d="M8 7.2 L10.2 9.6 L12.4 7.2" stroke="#ffffff" stroke-width="1.2" fill="none"/></svg>
<svg class="a" style="left:1693.5px;top:230.5px;" width="14.5" height="14" viewBox="0 0 14.5 14"><path d="M0.8 4.6 H8 M0.8 9.4 H8 M0.8 4.6 V9.4" stroke="#ffffff" stroke-width="1.7" fill="none"/><path d="M9.4 0.8 H13.4 M9.4 13.2 H13.4 M11.4 0.8 V13.2" stroke="#ffffff" stroke-width="1.6"/><path d="M11.4 4.6 H13.6 V9.4 H11.4" stroke="#ffffff" stroke-width="1.6" fill="none"/></svg>
<svg class="a" style="left:1727px;top:231.5px;" width="13.5" height="11.5" viewBox="0 0 13.5 11.5"><rect x="0.9" y="0.9" width="11.6" height="9.6" rx="1.8" fill="#ffffff"/><path d="M2.6 4.2h3M7.6 4.2h3M2.6 7.4h3M7.6 7.4h3" stroke="#4893ad" stroke-width="1.6"/></svg>
<div class="t" style="left:1331px;top:312.48px;font-size:34.2px;line-height:41.04px;color:#bdbdbd">RECHNUNG</div>
<div class="t" style="left:1642.2px;top:348.53px;font-size:13.4px;line-height:16.08px;color:#a9b56f;font-weight:bold;letter-spacing:0.75px">Max Mustermann GmbH</div>
<svg class="a" style="left:1695px;top:295px;" width="56" height="52" viewBox="0 0 56 52"><path d="M24.2 49.5 L26.2 13 L27.4 13 L29.6 49.5 Z" fill="#c9986a"/><path d="M26.2 35 L12.5 26.8 M27.6 34.5 L36.5 27.5 M28 33 L41.5 31.2" stroke="#c9986a" stroke-width="1.5" fill="none"/><path d="M0 -7 C5.25 -4.2 4.41 3.5 0 7 C-4.41 3.5 -5.25 -4.2 0 -7 Z" fill="#3b9997" transform="translate(19.5 11.5) rotate(-12)"/><path d="M0 -5 C3.75 -3.0 3.1500000000000004 2.5 0 5 C-3.1500000000000004 2.5 -3.75 -3.0 0 -5 Z" fill="#aab86e" transform="translate(26.59999999999991 7.300000000000011) rotate(0)"/><path d="M0 -6.8 C5.5 -4.08 4.620000000000001 3.4 0 6.8 C-4.620000000000001 3.4 -5.5 -4.08 0 -6.8 Z" fill="#a9b833" transform="translate(32.90000000000009 10.5) rotate(22)"/><path d="M0 -5.6 C4.75 -3.36 3.9899999999999998 2.8 0 5.6 C-3.9899999999999998 2.8 -4.75 -3.36 0 -5.6 Z" fill="#b3bd7c" transform="translate(12.400000000000091 16.100000000000023) rotate(-42)"/><path d="M0 -3.6 C3.5 -2.16 2.94 1.8 0 3.6 C-2.94 1.8 -3.5 -2.16 0 -3.6 Z" fill="#3e9c9a" transform="translate(39.299999999999955 14.699999999999989) rotate(45)"/><path d="M0 -4.6 C3.75 -2.76 3.1500000000000004 2.3 0 4.6 C-3.1500000000000004 2.3 -3.75 -2.76 0 -4.6 Z" fill="#4f8dbd" transform="translate(41.5 20.399999999999977) rotate(28)"/><path d="M0 -3.6 C2.75 -2.16 2.3100000000000005 1.8 0 3.6 C-2.3100000000000005 1.8 -2.75 -2.16 0 -3.6 Z" fill="#4f8dbd" transform="translate(6.7000000000000455 25.399999999999977) rotate(-80)"/><path d="M0 -5.4 C4.25 -3.24 3.57 2.7 0 5.4 C-3.57 2.7 -4.25 -3.24 0 -5.4 Z" fill="#a9b833" transform="translate(15.599999999999909 33.19999999999999) rotate(-65)"/><path d="M0 -4 C3.5 -2.4 2.94 2.0 0 4 C-2.94 2.0 -3.5 -2.4 0 -4 Z" fill="#96cbc3" transform="translate(21.200000000000045 37.39999999999998) rotate(22)"/><path d="M0 -4 C3.5 -2.4 2.94 2.0 0 4 C-2.94 2.0 -3.5 -2.4 0 -4 Z" fill="#b4bf66" transform="translate(36.799999999999955 36.69999999999999) rotate(55)"/><path d="M0 -5.6 C4.25 -3.36 3.57 2.8 0 5.6 C-3.57 2.8 -4.25 -3.36 0 -5.6 Z" fill="#a5d3cb" transform="translate(48.5 30.69999999999999) rotate(-88)"/><circle cx="22" cy="21.5" r="2" fill="#3f9b99"/><circle cx="32.2" cy="22.9" r="2.3" fill="#4b88b8"/></svg>
<div class="t" style="left:1333.4px;top:446.02px;font-size:7.5px;line-height:9.0px;color:#1c83c6;font-weight:bold;letter-spacing:0px">Max Mustermann GmbH – Musterstr. 12 – 12345 Musterstadt</div>
<div class="t" style="left:1333.4px;top:461.78px;font-size:9.8px;line-height:11.76px;color:#222;letter-spacing:-0.2px">Bauknecht Softfolio.pps GmbH</div>
<div class="t" style="left:1333.4px;top:475.03px;font-size:9.8px;line-height:11.76px;color:#222;letter-spacing:-0.2px">Andy Väth</div>
<div class="t" style="left:1333.4px;top:488.28px;font-size:9.8px;line-height:11.76px;color:#222;letter-spacing:-0.2px">Rottweiler Str. 12-14</div>
<div class="t" style="left:1333.4px;top:501.53px;font-size:9.8px;line-height:11.76px;color:#222;letter-spacing:-0.2px">78713 Schramberg</div>
<div class="t" style="right:135px;top:461.97px;font-size:9.6px;line-height:11.52px;color:#111;font-weight:bold;letter-spacing:-0.1px">Rechnung Nr.:</div>
<div class="t" style="left:1739.4px;top:461.97px;font-size:9.6px;line-height:11.52px;color:#222">2021-99999</div>
<div class="t" style="right:135px;top:475.32px;font-size:9.6px;line-height:11.52px;color:#111;font-weight:bold;letter-spacing:-0.1px">Rechnungsdatum:</div>
<div class="t" style="left:1739.4px;top:475.32px;font-size:9.6px;line-height:11.52px;color:#222">21.02.2021</div>
<div class="t" style="right:135px;top:488.67px;font-size:9.6px;line-height:11.52px;color:#111;font-weight:bold;letter-spacing:-0.1px">Lieferdatum:</div>
<div class="t" style="left:1739.4px;top:488.67px;font-size:9.6px;line-height:11.52px;color:#222">17.02.2021</div>
<div class="t" style="right:135px;top:502.02px;font-size:9.6px;line-height:11.52px;color:#111;font-weight:bold;letter-spacing:-0.1px">Lieferantennr.:</div>
<div class="t" style="left:1739.4px;top:502.02px;font-size:9.6px;line-height:11.52px;color:#222">K990202</div>
<div class="t" style="right:135px;top:515.37px;font-size:9.6px;line-height:11.52px;color:#111;font-weight:bold;letter-spacing:-0.1px">Ansprechpartner:</div>
<div class="t" style="left:1739.4px;top:515.37px;font-size:9.6px;line-height:11.52px;color:#222">Max Muster</div>
<div class="t" style="right:135px;top:528.72px;font-size:9.6px;line-height:11.52px;color:#111;font-weight:bold;letter-spacing:-0.1px">Ihre Bestellnr.:</div>
<div class="t" style="left:1739.4px;top:528.72px;font-size:9.6px;line-height:11.52px;color:#222">12345678</div>
<div class="t" style="left:1335.5px;top:564.29px;font-size:11.3px;line-height:13.56px;color:#1c83c6;font-weight:bold">RECHNUNG NR. 2021-99997</div>
<div class="t" style="left:1335.5px;top:602.57px;font-size:9.6px;line-height:11.52px;color:#222">Sehr geehrte Damen und Herren,</div>
<div class="t" style="left:1335.5px;top:626.57px;font-size:9.6px;line-height:11.52px;color:#222">wir stellen Ihnen hiermit folgende Leistungen in Rechnung:</div>
<div class="a" style="left:1334.8px;top:651px;width:286.5px;height:21.7px;background:#0b7cc4"></div>
<div class="a" style="left:1621.3px;top:651px;width:193.1px;height:21.7px;background:#c8c8c8"></div>
<div class="t" style="left:1343.8px;top:656.25px;font-size:9.4px;line-height:11.28px;color:#fff;font-weight:bold">Pos.</div>
<div class="t" style="left:1374px;top:656.25px;font-size:9.4px;line-height:11.28px;color:#fff;font-weight:bold">Beschreibung</div>
<div class="t" style="right:255.5999999999999px;top:656.25px;font-size:9.4px;line-height:11.28px;color:#fff;font-weight:bold">Menge</div>
<div class="t" style="right:181.5999999999999px;top:656.25px;font-size:9.4px;line-height:11.28px;color:#222;font-weight:bold">Einzelpreis</div>
<div class="t" style="right:135px;top:656.25px;font-size:9.4px;line-height:11.28px;color:#222;font-weight:bold">Rabatt</div>
<div class="t" style="right:55.40000000000009px;top:656.25px;font-size:9.4px;line-height:11.28px;color:#222;font-weight:bold">Gesamtpreis</div>
<div class="t" style="right:500.20000000000005px;top:678.25px;font-size:9.4px;line-height:11.28px;color:#222">1.</div>
<div class="t" style="left:1374px;top:678.25px;font-size:9.4px;line-height:11.28px;color:#222">Stehleuchte</div>
<div class="t" style="right:255.5999999999999px;top:678.25px;font-size:9.4px;line-height:11.28px;color:#222">5,00 Stk.</div>
<div class="t" style="right:181.5999999999999px;top:678.25px;font-size:9.4px;line-height:11.28px;color:#222">8,00 €</div>
<div class="t" style="right:135px;top:678.25px;font-size:9.4px;line-height:11.28px;color:#222">5%</div>
<div class="t" style="right:55.40000000000009px;top:678.25px;font-size:9.4px;line-height:11.28px;color:#222">38,00 €</div>
<div class="t" style="right:500.20000000000005px;top:700.15px;font-size:9.4px;line-height:11.28px;color:#222">2.</div>
<div class="t" style="left:1374px;top:700.15px;font-size:9.4px;line-height:11.28px;color:#222">Elektromotor</div>
<div class="t" style="right:255.5999999999999px;top:700.15px;font-size:9.4px;line-height:11.28px;color:#222">10,00 Stk.</div>
<div class="t" style="right:181.5999999999999px;top:700.15px;font-size:9.4px;line-height:11.28px;color:#222">47,00 €</div>
<div class="t" style="right:135px;top:700.15px;font-size:9.4px;line-height:11.28px;color:#222">3%</div>
<div class="t" style="right:55.40000000000009px;top:700.15px;font-size:9.4px;line-height:11.28px;color:#222">455,90 €</div>
<div class="a" style="left:1334.8px;top:694px;width:479.6px;height:0.8px;background:#c4c4c4"></div>
<div class="a" style="left:1334.8px;top:715.7px;width:479.6px;height:1.7px;background:#222"></div>
<div class="t" style="right:181.5999999999999px;top:721.85px;font-size:9.4px;line-height:11.28px;color:#111;font-weight:bold">Nettobetrag</div>
<div class="t" style="right:55.40000000000009px;top:721.85px;font-size:9.4px;line-height:11.28px;color:#111;font-weight:bold">493.90 €</div>
<div class="a" style="left:1621.3px;top:738.8px;width:193.1px;height:0.8px;background:#c4c4c4"></div>
<div class="t" style="right:181.5999999999999px;top:744.05px;font-size:9.4px;line-height:11.28px;color:#222">Steuerbetrag</div>
<div class="t" style="right:55.40000000000009px;top:744.05px;font-size:9.4px;line-height:11.28px;color:#222">93,84 €</div>
<div class="a" style="left:1621.3px;top:760.2px;width:193.1px;height:1.6px;background:#333"></div>
<div class="a" style="left:1621.3px;top:761.8px;width:193.1px;height:21.8px;background:#0b7cc4"></div>
<div class="t" style="left:1626px;top:766.95px;font-size:9.4px;line-height:11.28px;color:#fff;font-weight:bold">Bruttobetrag</div>
<div class="t" style="right:55.40000000000009px;top:766.95px;font-size:9.4px;line-height:11.28px;color:#fff;font-weight:bold">587,74 €</div>
<div class="t" style="left:1335.3px;top:795.57px;font-size:7.55px;line-height:9.06px;color:#222;letter-spacing:0px">Zahlungsbedingungen: Zahlung innerhalb von 10 Tagen ab Rechnungseingang mit 2% Skonto, 30 Tage netto.</div>
<div class="a" style="left:1282px;top:512px;width:14px;height:1px;background:#a8a8a8"></div>
<div class="a" style="left:1282px;top:791px;width:14px;height:1px;background:#a8a8a8"></div>
<svg class="a" style="left:925.5px;top:-4px" width="60" height="60" viewBox="0 0 60 60"><circle cx="30.3" cy="30.6" r="25.9" fill="#3d6e2c" opacity="0.55"/><circle cx="30" cy="30" r="25.9" fill="#53ad34"/><path d="M33.40 14.40 L33.40 41.30 L29.20 41.30 L29.20 20.40 Q26.10 22.90 22.30 23.80 L22.30 19.90 Q27.40 18.30 30.20 14.40 Z" fill="#2f5f22" opacity="0.6" transform="translate(0.5 0.6)"/><path d="M33.40 14.40 L33.40 41.30 L29.20 41.30 L29.20 20.40 Q26.10 22.90 22.30 23.80 L22.30 19.90 Q27.40 18.30 30.20 14.40 Z" fill="#ffffff"/></svg>
<svg class="a" style="left:923.4px;top:119.80000000000001px" width="60" height="60" viewBox="0 0 60 60"><circle cx="30.3" cy="30.6" r="25.9" fill="#3d6e2c" opacity="0.55"/><circle cx="30" cy="30" r="25.9" fill="#53ad34"/><text x="29.399999999999977" y="42.4" text-anchor="middle" font-family="Liberation Sans" font-size="38.6" fill="#2f5f22" opacity="0.6">2</text><text x="28.899999999999977" y="41.8" text-anchor="middle" font-family="Liberation Sans" font-size="38.6" fill="#ffffff" stroke="#fff" stroke-width="0.15">2</text></svg>
<svg class="a" style="left:923.5px;top:385.9px" width="60" height="60" viewBox="0 0 60 60"><circle cx="30.3" cy="30.6" r="25.9" fill="#3d6e2c" opacity="0.55"/><circle cx="30" cy="30" r="25.9" fill="#53ad34"/><text x="29.399999999999977" y="42.100000000000016" text-anchor="middle" font-family="Liberation Sans" font-size="38.6" fill="#2f5f22" opacity="0.6">3</text><text x="28.899999999999977" y="41.500000000000014" text-anchor="middle" font-family="Liberation Sans" font-size="38.6" fill="#ffffff" stroke="#fff" stroke-width="0.15">3</text></svg>
<svg class="a" style="left:926.5px;top:705.9px" width="60" height="60" viewBox="0 0 60 60"><circle cx="30.3" cy="30.6" r="25.9" fill="#3d6e2c" opacity="0.55"/><circle cx="30" cy="30" r="25.9" fill="#53ad34"/><text x="28.799999999999955" y="41.90000000000003" text-anchor="middle" font-family="Liberation Sans" font-size="38.6" fill="#2f5f22" opacity="0.6">4</text><text x="28.299999999999955" y="41.300000000000026" text-anchor="middle" font-family="Liberation Sans" font-size="38.6" fill="#ffffff" stroke="#fff" stroke-width="0.15">4</text></svg>
<svg class="a" style="left:1578.5px;top:397.9px" width="60" height="60" viewBox="0 0 60 60"><circle cx="30.3" cy="30.6" r="25.9" fill="#3d6e2c" opacity="0.55"/><circle cx="30" cy="30" r="25.9" fill="#53ad34"/><text x="29.59999999999991" y="42.00000000000005" text-anchor="middle" font-family="Liberation Sans" font-size="38.6" fill="#2f5f22" opacity="0.6">5</text><text x="29.09999999999991" y="41.40000000000005" text-anchor="middle" font-family="Liberation Sans" font-size="38.6" fill="#ffffff" stroke="#fff" stroke-width="0.15">5</text></svg>
</body></html>
